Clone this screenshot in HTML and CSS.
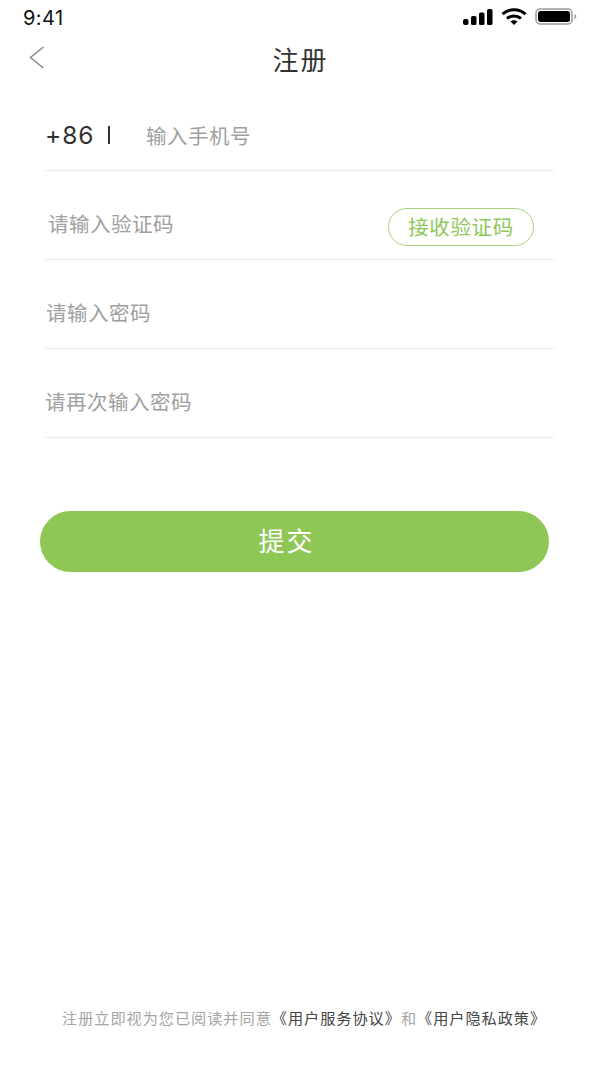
FILE: index.html
```html
<!DOCTYPE html>
<html lang="zh">
<head>
<meta charset="utf-8">
<title>注册</title>
<link rel="stylesheet" href="styles.css">
</head>
<body>
<div class="page">
  <div class="status">
    <span class="time">9:41</span>
    <div class="status-icons">
      <svg class="ic-signal" width="30" height="16" viewBox="0 0 30 16"><rect x="0" y="10" width="5.500" height="6" rx="2"/><rect x="8" y="7" width="5.500" height="9" rx="1.500"/><rect x="16" y="3.500" width="5.500" height="12.500" rx="1.500"/><rect x="24" y="0" width="5.500" height="16" rx="1.500"/></svg>
      <svg class="ic-wifi" width="26" height="17" viewBox="0 0 26 17"><path d="M1.500 6.200C8 .2 18 .2 24.500 6.200" fill="none" stroke="#000" stroke-width="3"/><path d="M6 10.500c4-3.500 10-3.500 14 0" fill="none" stroke="#000" stroke-width="3"/><path d="M9.500 13.500c2-1.600 5-1.600 7 0L13 17z" fill="#000"/></svg>
      <svg class="ic-battery" width="42" height="17" viewBox="0 0 42 17"><rect x="1" y="1" width="36" height="15" rx="4" fill="none" stroke="#999" stroke-width="1.500"/><rect x="3" y="3" width="32" height="11" rx="2.500" fill="#000"/><path d="M39.500 6c1.200.4 1.800 1.300 1.800 2.500s-.6 2.100-1.800 2.500z" fill="#999"/></svg>
    </div>
  </div>
  <header class="nav">
    <svg class="back" width="16" height="23" viewBox="0 0 16 23"><path d="M14.500 1 1.500 11.500l13 10.500" fill="none" stroke="#8a8a8a" stroke-width="1.600"/></svg>
    <h1 class="title">注册</h1>
  </header>
  <main class="form">
    <div class="row row-phone">
      <span class="code">+86</span>
      <span class="sep"></span>
      <span class="ph">输入手机号</span>
    </div>
    <div class="row row-code">
      <span class="ph ph-code">请输入验证码</span>
      <button class="get-code" type="button">接收验证码</button>
    </div>
    <div class="row">
      <span class="ph ph-pw">请输入密码</span>
    </div>
    <div class="row">
      <span class="ph">请再次输入密码</span>
    </div>
  </main>
  <button class="submit" type="button">提交</button>
  <footer class="foot">注册立即视为您已阅读并同意<span class="link">《用户服务协议》</span>和<span class="link">《用户隐私政策》</span></footer>
</div>
</body>
</html>
```

FILE: styles.css
```css
* { box-sizing: border-box; }
html, body { margin: 0; padding: 0; background: #fff; }
body { font-family: "Noto Sans CJK SC", "Liberation Sans", sans-serif; }
.page { width: 600px; height: 1067px; display: flex; flex-direction: column; overflow: hidden; }

.status { height: 36px; display: flex; justify-content: space-between; align-items: flex-start; padding: 8px 23px 0; flex: none; }
.time { font-family: "Inter", "Liberation Sans", sans-serif; font-size: 20px; color: #111; letter-spacing: .4px; line-height: 20px; }
.status-icons { display: flex; align-items: center; gap: 8px; margin-right: 0; }

.nav { height: 50px; display: flex; align-items: center; justify-content: center; position: relative; flex: none; }
.back { position: absolute; left: 29px; top: 10px; }
.title { margin: -4px 0 0; font-size: 26px; font-weight: 400; color: #333; line-height: 50px; letter-spacing: 2px; padding-left: 1px; }

.form { margin: 0 46px 0 45px; display: flex; flex-direction: column; }
.row { height: 89px; display: flex; align-items: center; border-bottom: 1px solid #ececec; padding-top: 16px; }
.row:first-child { height: 85px; padding-top: 14px; }
.ph { font-size: 20.500px; letter-spacing: .5px; color: #a0a0a0; line-height: 30px; }
.code { font-family: "Inter", "Liberation Sans", sans-serif; font-size: 24.500px; color: #333; width: 63px; letter-spacing: 1px; }
.sep { width: 2px; height: 18px; background: #333; margin-right: 36px; }
.ph-code { margin-left: 3px; }
.ph-pw { margin-left: 1px; }
.row-code { justify-content: space-between; }
.get-code { width: 146px; height: 38px; margin: 7px 20px 0 0; padding: 0 0 2px; border: 1px solid #a9d384; border-radius: 19px; background: #fff; color: #8fc759; font-family: inherit; font-size: 20.500px; letter-spacing: .6px; line-height: 34px; }

.submit { flex: none; width: 509px; height: 61px; margin: 73px 0 0 40px; border: 0; border-radius: 31px; background: #8fc757; color: #fff; font-family: inherit; font-size: 26px; letter-spacing: 2px; padding: 0 16px 4px 0; }

.foot { margin-top: auto; padding: 0 0 38px 62px; font-size: 15.200px; letter-spacing: .95px; color: #a4a4a4; line-height: 24px; white-space: nowrap; }
.link { color: #444; }
```
